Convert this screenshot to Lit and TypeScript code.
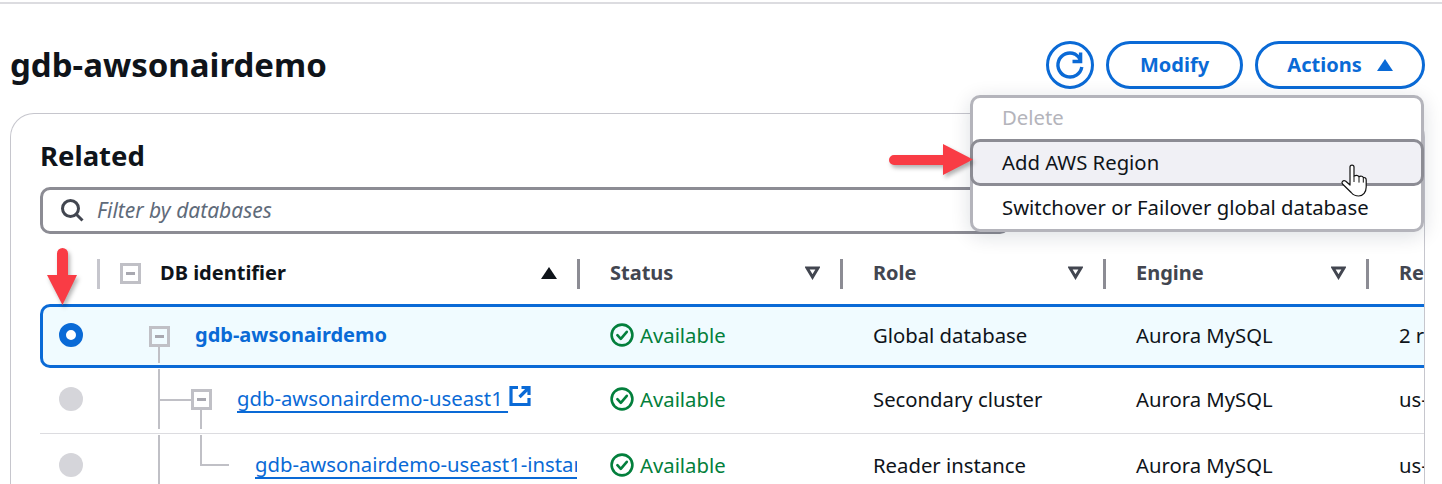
import { LitElement, css, html, svg } from 'lit';
import { customElement } from 'lit/decorators.js';

const treeBox = html`<span class="tree-box"><span></span></span>`;

const statusOk = html`<span class="status">
  <svg width="24" height="24" viewBox="0 0 24 24" fill="none" stroke="#037f3c" stroke-width="2.6">
    <circle cx="12" cy="12" r="10.4"></circle>
    <path d="M7.4 12.2l3.400 3.600 6-7" stroke-linecap="round" stroke-linejoin="round"></path>
  </svg>
  Available
</span>`;

const filterIcon = svg`<path d="M2 2h11L7.500 11z" fill="none" stroke="#424650" stroke-width="3" stroke-linejoin="miter"></path>`;

@customElement('app-root')
export class AppRoot extends LitElement {
  static styles = css`
    :host {
      display: block;
      position: relative;
      width: 1442px;
      height: 484px;
      overflow: hidden;
      background: #fff;
      color: #0f141a;
      font: 20.3px/28px 'Noto Sans', 'Open Sans', sans-serif;
    }

    .top-line {
      height: 2px;
      margin-top: 2px;
      background: #dcdce0;
    }

    header {
      display: flex;
      align-items: center;
      height: 48px;
      margin-top: 37px;
      padding: 0 17px 0 10px;
      gap: 12px;
    }

    h1 {
      flex: 1;
      margin: 0;
      font-size: 33px;
      line-height: 40px;
      font-weight: 700;
    }

    .btn {
      display: flex;
      align-items: center;
      justify-content: center;
      box-sizing: border-box;
      height: 48px;
      border: 3px solid #0a6ad6;
      border-radius: 24px;
      color: #0a6ad6;
      font-size: 20px;
      font-weight: 700;
    }

    .btn.round { width: 48px; }
    .btn.modify { width: 137px; }
    .btn.actions { width: 170px; gap: 15px; }

    .card {
      box-sizing: border-box;
      width: 1415px;
      height: 500px;
      margin: 24px 0 0 10px;
      padding: 24px 0 0 29px;
      border: 1px solid #c6c6cd;
      border-bottom: 0;
      border-radius: 24px 24px 0 0;
      overflow: hidden;
    }

    h2 {
      margin: 0;
      font-size: 27.5px;
      line-height: 36px;
      font-weight: 700;
    }

    .filter {
      display: flex;
      align-items: center;
      gap: 13px;
      box-sizing: border-box;
      width: 970px;
      height: 47px;
      margin-top: 13px;
      padding: 0 0 2px 17px;
      border: 3px solid #8c8c94;
      border-radius: 10px;
      color: #5f6b7a;
      font-size: 21px;
      font-style: italic;
    }

    .row {
      display: grid;
      grid-template-columns: 58px 479px 263px 263px 263px 60px;
      box-sizing: border-box;
      width: 1385px;
      align-items: center;
    }

    .head {
      grid-template-columns: 57px 480px 263px 263px 263px 60px;
      height: 30px;
      margin-top: 25px;
      margin-bottom: 15px;
      font-size: 20px;
      font-weight: 700;
      color: #424650;
    }

    .head > div {
      display: flex;
      align-items: center;
      height: 30px;
      box-sizing: border-box;
      padding: 0 20px 2px 30px;
      border-left: 3px solid #8c8c94;
      white-space: nowrap;
    }

    .head > div:first-child { border: 0; }
    .head > div:nth-child(2) {
      padding-left: 20px;
      border-left-color: #c6c6cd;
      color: #0f141a;
    }
    .head .label { flex: 1; }
    .head .name { margin-left: 19px; }

    .body-row {
      height: 66px;
      padding-bottom: 3px;
      border-bottom: 1px solid #dcdce0;
    }

    .body-row > div {
      padding-left: 33px;
      white-space: nowrap;
      overflow: hidden;
    }

    .body-row > div:first-child,
    .body-row > div:nth-child(2) { padding-left: 0; }

    .body-row.selected {
      grid-template-columns: 55px 479px 263px 263px 263px 60px;
      height: 64px;
      padding-bottom: 2px;
      background: #f0fbff;
      border: 3px solid #0a6ad6;
      border-right: 0;
      border-radius: 10px 0 0 10px;
    }

    .body-row.selected > div:first-child { margin-left: -3px; }

    .radio {
      display: block;
      box-sizing: border-box;
      width: 24px;
      height: 24px;
      margin-left: 19px;
      border-radius: 50%;
      background: #d5d5da;
    }

    .radio.on {
      background: #fff;
      border: 7px solid #0a6ad6;
    }

    .tree {
      position: relative;
      display: flex;
      align-items: center;
      height: 60px;
      overflow: visible;
    }

    .selected .tree { height: 56px; }

    .tree a {
      margin-bottom: 3px;
      color: #0a6ad6;
    }

    .selected .tree a {
      margin-left: 97px;
      margin-bottom: 0;
      font-size: 20px;
      font-weight: 700;
    }

    .child a,
    .leaf a {
      text-decoration: underline;
      text-decoration-thickness: 2px;
      text-underline-offset: 5px;
    }

    .child a { margin-left: 139px; }
    .leaf a { margin-left: 157px; }

    .tree-box {
      position: absolute;
      display: flex;
      align-items: center;
      justify-content: center;
      box-sizing: border-box;
      width: 21px;
      height: 21px;
      border: 3px solid #c0c0c6;
      background: #fff;
    }

    .tree-box span {
      width: 9px;
      height: 3px;
      background: #a8a8b0;
    }

    .head .tree-box { position: static; flex: none; }
    .selected .tree-box { left: 51px; top: 19px; background: #f0fbff; }
    .child .tree-box { left: 93px; top: 20px; }

    .line {
      position: absolute;
      background: #c0c0c6;
    }

    .ext { margin: 0 0 6px 1px; flex: none; }

    .status {
      display: flex;
      align-items: center;
      gap: 6px;
      color: #037f3c;
    }

    .menu {
      position: absolute;
      left: 970px;
      top: 95px;
      box-sizing: border-box;
      width: 454px;
      height: 137px;
      border: 3px solid #b4b4bb;
      border-radius: 10px;
      background: #fff;
      box-shadow: 0 4px 20px rgba(0, 25, 50, 0.14);
    }

    .item {
      display: flex;
      align-items: center;
      box-sizing: border-box;
      padding-left: 29px;
      padding-bottom: 2px;
      white-space: nowrap;
    }

    .item.disabled {
      height: 41px;
      padding-bottom: 3px;
      color: #b4b4bb;
    }

    .item.hover {
      height: 47px;
      margin: 0 -3px;
      background: #f0f0f5;
      border: 3px solid #8c8c94;
      border-radius: 10px;
    }

    .item.last { height: 44px; }

    .overlay {
      position: absolute;
      pointer-events: none;
    }

    .arrow { filter: drop-shadow(2px 3px 2px rgba(0, 0, 0, 0.3)); }
  `;

  render() {
    return html`
      <div class="top-line"></div>
      <header>
        <h1>gdb-awsonairdemo</h1>
        <div class="btn round">
          <svg width="30" height="30" viewBox="0 0 30 30" fill="none" stroke="#0a6ad6" stroke-width="3.4">
            <path d="M26.800 17A12 12 0 1 1 20 4.100Q23.500 6 25.500 10.500"></path>
            <path d="M25.600 2.500V11.500H17.500"></path>
          </svg>
        </div>
        <div class="btn modify">Modify</div>
        <div class="btn actions">
          Actions
          <svg width="16" height="12" viewBox="0 0 16 12"><path d="M8 0l8 12H0z" fill="#0a6ad6"></path></svg>
        </div>
      </header>

      <section class="card">
        <h2>Related</h2>
        <div class="filter">
          <svg width="24" height="24" viewBox="0 0 24 24" fill="none" stroke="#424650" stroke-width="3">
            <circle cx="10.500" cy="10.500" r="8"></circle>
            <path d="M16.500 16.500l6 6"></path>
          </svg>
          Filter by databases
        </div>

        <div class="row head">
          <div></div>
          <div>
            ${treeBox}
            <span class="label name">DB identifier</span>
            <svg width="16" height="12" viewBox="0 0 16 12"><path d="M8 0l8 12H0z" fill="#0f141a"></path></svg>
          </div>
          ${['Status', 'Role', 'Engine'].map(
            (label) => html`<div>
              <span class="label">${label}</span>
              <svg width="15" height="14" viewBox="0 0 15 14">${filterIcon}</svg>
            </div>`
          )}
          <div>Region</div>
        </div>

        <div class="row body-row selected">
          <div><span class="radio on"></span></div>
          <div class="tree">
            ${treeBox}
            <span class="line" style="left:60px;top:40px;width:2px;height:21px"></span>
            <a>gdb-awsonairdemo</a>
          </div>
          <div>${statusOk}</div>
          <div>Global database</div>
          <div>Aurora MySQL</div>
          <div>2 regions</div>
        </div>

        <div class="row body-row">
          <div><span class="radio"></span></div>
          <div class="tree child">
            <span class="line" style="left:60px;top:0;width:2px;height:62px"></span>
            <span class="line" style="left:60px;top:30px;width:33px;height:2px"></span>
            <span class="line" style="left:102px;top:40px;width:2px;height:26px"></span>
            ${treeBox}
            <a>gdb-awsonairdemo-useast1&nbsp;</a>
            <svg class="ext" width="22" height="22" viewBox="0 0 22 22" fill="none" stroke="#0a6ad6" stroke-width="3.200">
              <path d="M9 2.500H2v17h18V13"></path>
              <path d="M12.500 2.500h7.500v7.500M20 2.500l-9.500 9.500"></path>
            </svg>
          </div>
          <div>${statusOk}</div>
          <div>Secondary cluster</div>
          <div>Aurora MySQL</div>
          <div>us-east-1</div>
        </div>

        <div class="row body-row">
          <div><span class="radio"></span></div>
          <div class="tree leaf">
            <span class="line" style="left:60px;top:0;width:2px;height:70px"></span>
            <span class="line" style="left:102px;top:0;width:2px;height:31px"></span>
            <span class="line" style="left:102px;top:29px;width:29px;height:2px"></span>
            <a>gdb-awsonairdemo-useast1-instance-1</a>
          </div>
          <div>${statusOk}</div>
          <div>Reader instance</div>
          <div>Aurora MySQL</div>
          <div>us-east-1</div>
        </div>
      </section>

      <div class="menu">
        <div class="item disabled">Delete</div>
        <div class="item hover">Add AWS Region</div>
        <div class="item last">Switchover or Failover global database</div>
      </div>

      <!-- annotation arrows and pointer drawn over the screenshot -->
      <svg class="overlay arrow" style="left:885px;top:135px" width="96" height="52" viewBox="0 0 96 52">
        <path d="M9 20H58V9L88 24.500 58 40V30H9a5 5 0 0 1 0-10z" fill="#f93c45"></path>
      </svg>
      <svg class="overlay arrow" style="left:42px;top:244px" width="44" height="70" viewBox="0 0 44 70">
        <path d="M15 9.500a5.500 5.500 0 0 1 11 0V31h9L20.500 61 5 31h10z" fill="#f93c45"></path>
      </svg>
      <svg class="overlay" style="left:1340px;top:163px" width="30" height="36" viewBox="0 0 30 36">
        <path d="M10 4c0-2.600 4-2.600 4 0v9c2-1 4-.8 5 .6 2-.8 3.800-.4 4.300 1 1.800-.4 2.900.6 2.900 2.400v7c0 5-3 9-7.500 9-3.500 0-5.500-1-7.500-3.500L2.500 21c-1.500-2 .5-4 3-3l4.500 4z" fill="#fff" stroke="#111" stroke-width="1.200" stroke-linejoin="round"></path>
        <path d="M14 13v6M19 13.600v6M23.300 14.600v5" stroke="#111" stroke-width="1"></path>
      </svg>
    `;
  }
}
